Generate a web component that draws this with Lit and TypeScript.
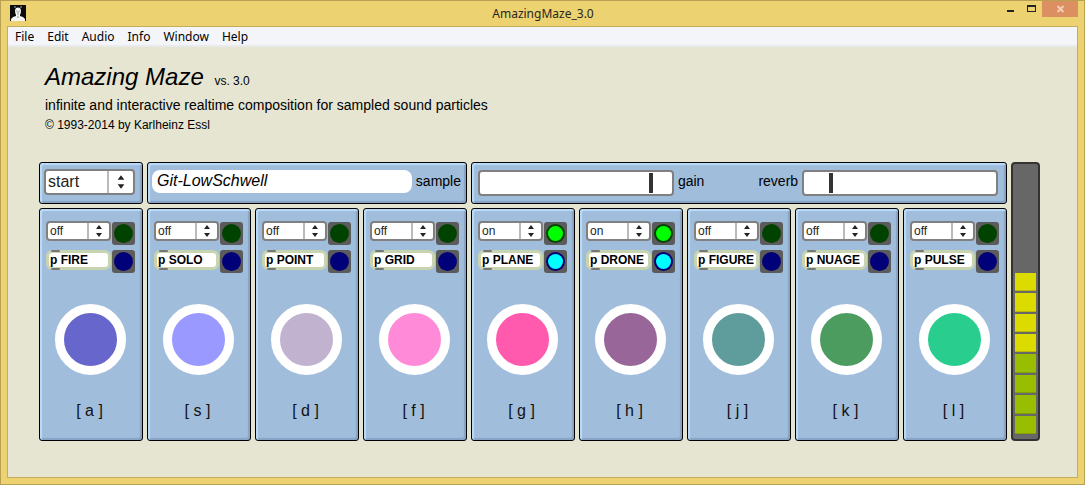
import { LitElement, html, svg, css } from "lit";
import { customElement, property, state } from "lit/decorators.js";

interface Channel {
  name: string;
  key: string;
  color: string;
  on: boolean;
}

@customElement("maze-menu")
export class MazeMenu extends LitElement {
  static styles = css`
    :host {
      display: grid;
      align-items: center;
    }
    .select,
    .arrows {
      grid-area: 1 / 1;
    }
    .select {
      appearance: none;
      box-sizing: border-box;
      width: 100%;
      height: 20px;
      margin: 0;
      padding: 0 22px 0 2px;
      border: 2px solid #808080;
      border-radius: 4px;
      background: #fff;
      color: #222;
      font: 12px/16px "Liberation Sans", Arial, sans-serif;
    }
    .arrows {
      justify-self: end;
      box-sizing: border-box;
      width: 22px;
      height: 16px;
      margin-right: 2px;
      border-left: 2px solid #bbb;
      pointer-events: none;
    }
    .select.large {
      height: 26px;
      padding-right: 28px;
      font-size: 16px;
      line-height: 22px;
    }
    .arrows.large {
      width: 26px;
      height: 22px;
      padding: 2px;
    }
  `;

  @property() label = "";
  @property() value = "";
  @property({ type: Array }) options: string[] = [];
  @property({ type: Boolean }) large = false;

  private pick(event: Event) {
    this.value = (event.target as HTMLSelectElement).value;
    this.dispatchEvent(new CustomEvent("pick", { detail: this.value }));
  }

  render() {
    const size = this.large ? "large" : "";
    return html`
      <select class="select ${size}" aria-label=${this.label} @change=${this.pick}>
        ${this.options.map((o) => html`<option ?selected=${o === this.value}>${o}</option>`)}
      </select>
      <svg class="arrows ${size}" viewBox="0 0 18 16" aria-hidden="true">
        <path d="M6 6 L9 2 L12 6 Z M6 10 L9 14 L12 10 Z" fill="#222" />
      </svg>
    `;
  }
}

@customElement("maze-channel")
export class MazeChannel extends LitElement {
  static styles = css`
    :host {
      display: flex;
      flex-direction: column;
      padding: 12px 7px 20px 6px;
    }
    .row {
      display: grid;
      grid-template-columns: minmax(0, 1fr) 23px;
      column-gap: 1px;
      align-items: start;
    }
    .switch {
      height: 24px;
      margin-bottom: 5px;
    }
    .led {
      display: block;
      width: 23px;
      height: 23px;
      align-self: end;
    }
    .patch {
      position: relative;
      box-sizing: border-box;
      height: 20px;
      margin: 0;
      padding: 0 0 0 1px;
      border: 3px solid #c8d3af;
      border-radius: 6px;
      background: #fff;
      color: #000;
      font: bold 12px/14px "Liberation Sans", Arial, sans-serif;
      text-align: left;
      white-space: nowrap;
    }
    .patch::before,
    .patch::after {
      content: "";
      position: absolute;
      left: 2px;
      width: 9px;
      height: 2px;
      border-radius: 1px;
      background: #777;
    }
    .patch::before {
      top: -3px;
    }
    .patch::after {
      bottom: -3px;
    }
    .pad {
      align-self: center;
      box-sizing: border-box;
      width: 71px;
      height: 71px;
      margin: 31px 0 27px;
      padding: 0;
      border: 9px solid #fff;
      border-radius: 50%;
    }
    .key {
      padding-right: 2px;
      color: #111;
      font-size: 16px;
      line-height: 18px;
      text-align: center;
    }
  `;

  @property({ type: Object }) channel!: Channel;
  @state() private on = false;

  willUpdate(changed: Map<string, unknown>) {
    if (changed.has("channel")) this.on = this.channel.on;
  }

  private led(title: string, lit: string, dark: string) {
    return html`
      <svg class="led" viewBox="0 0 23 23" role="img" aria-label=${title}>
        <rect width="23" height="23" rx="3" fill="#5b5b5b" />
        <circle cx="11.5" cy="11.5" r="9.5" fill=${dark} />
        ${this.on ? svg`<circle cx="11.5" cy="11.5" r="7.5" fill=${lit} />` : null}
      </svg>
    `;
  }

  render() {
    const { name, key, color } = this.channel;
    return html`
      <div class="row switch">
        <maze-menu
          .label=${name + " switch"}
          .value=${this.on ? "on" : "off"}
          .options=${["off", "on"]}
          @pick=${(e: CustomEvent) => (this.on = e.detail === "on")}
        ></maze-menu>
        ${this.led(name + " power", "#00ff00", "#004300")}
      </div>
      <div class="row">
        <button class="patch" type="button">p ${name}</button>
        ${this.led(name + " activity", "#00ffff", "#000078")}
      </div>
      <button
        class="pad"
        type="button"
        aria-label="Trigger ${name}"
        style="background:${color}"
      ></button>
      <div class="key">[ ${key} ]</div>
    `;
  }
}

@customElement("app-root")
export class AppRoot extends LitElement {
  static styles = css`
    :host {
      display: flex;
      flex-direction: column;
      box-sizing: border-box;
      min-height: 100vh;
      padding: 0 7px 6px;
      border: 1px solid #b8a152;
      background: #ecd270;
      color: #000;
      font-family: "Liberation Sans", Arial, sans-serif;
    }
    .titlebar {
      display: grid;
      grid-template-columns: 92px 1fr 92px;
      align-items: start;
      height: 25px;
      margin-right: -1px;
      font: 12px/25px "Noto Sans", "Open Sans", sans-serif;
      color: #2b2620;
    }
    .app-icon {
      display: block;
      width: 16px;
      height: 16px;
      margin: 4px 0 0 2px;
    }
    .caption {
      text-align: center;
    }
    .window-buttons {
      display: flex;
      justify-content: flex-end;
    }
    .window-button {
      width: 21px;
      height: 16px;
      margin: 0;
      padding: 0;
      border: 0;
      background: none;
    }
    .window-button.close {
      width: 36px;
      background: #dc8f61;
    }
    .window-button svg {
      display: block;
      margin: auto;
    }
    .frame {
      flex: 1;
      display: flex;
      flex-direction: column;
      border: 1px solid #c4ae5c;
      margin: 0 -1px;
      background: #e6e5d2;
    }
    .menubar {
      display: flex;
      gap: 13px;
      padding: 2px 7px 0;
      border-bottom: 2px solid #e9eaeb;
      background: #f4f5f8;
      font: 12px/16px "Noto Sans", "Open Sans", sans-serif;
    }
    .menubar a {
      color: #000;
      text-decoration: none;
    }
    .content {
      padding: 18px 37px 35px 31px;
    }
    .intro {
      padding: 0 6px;
      margin-bottom: 28px;
    }
    .name {
      margin: 0;
      font-size: 24px;
      line-height: 24px;
      font-weight: normal;
    }
    .version {
      margin-left: 4px;
      font-size: 12px;
    }
    .subtitle {
      margin: 0;
      font-size: 14px;
      line-height: 24px;
    }
    .credit {
      margin: 0;
      font-size: 12px;
      line-height: 17px;
    }
    .board {
      display: grid;
      grid-template-columns: repeat(9, minmax(0, 1fr)) 29px;
      gap: 4px;
    }
    .panel {
      box-sizing: border-box;
      border: 1px solid #000;
      border-radius: 3px;
      background: #a1bddc;
      box-shadow:
        inset 2px 2px 1px #b9daf8,
        inset -2px -2px 1px #86a3c6;
    }
    .bar {
      display: flex;
      align-items: center;
      height: 42px;
      font-size: 14px;
      line-height: 18px;
    }
    .transport {
      padding: 0 7px 2px 4px;
    }
    .transport maze-menu {
      flex: 1;
    }
    .sample {
      grid-column: span 3;
      gap: 4px;
      padding: 0 5px 4px 4px;
    }
    .file {
      flex: 1;
      box-sizing: border-box;
      min-width: 0;
      height: 23px;
      margin: 0;
      padding: 0 5px;
      border: 0;
      border-radius: 8px;
      background: #fff;
      color: #000;
      font: italic 16px/20px "Liberation Sans", Arial, sans-serif;
    }
    .mix {
      grid-column: span 5;
      gap: 4px;
      padding: 0 8px 0 6px;
    }
    .mix label {
      padding-bottom: 4px;
    }
    .reverb-label {
      margin-left: 50px;
    }
    .slider {
      appearance: none;
      flex: 1;
      box-sizing: border-box;
      min-width: 0;
      height: 26px;
      margin: 0;
      border: 2px solid #808080;
      border-radius: 4px;
      background: #fff;
    }
    .slider::-webkit-slider-thumb {
      appearance: none;
      width: 4px;
      height: 20px;
      border-radius: 0;
      background: #333;
    }
    .slider::-moz-range-thumb {
      width: 4px;
      height: 20px;
      border: 0;
      border-radius: 0;
      background: #333;
    }
    .meter {
      grid-column: 10;
      grid-row: 1 / 3;
      display: grid;
      grid-auto-rows: 1fr;
      gap: 2px;
      padding: 7px 2px 5px;
      border: 2px solid #333;
      border-radius: 4px;
      background: #676767;
    }
    .segment.low {
      background: #99bd00;
      box-shadow: inset 0 -1px #83a000;
    }
    .segment.high {
      background: #dbdb00;
      box-shadow: inset 0 -1px #b9b900;
    }
  `;

  private menus = ["File", "Edit", "Audio", "Info", "Window", "Help"];

  private channels: Channel[] = [
    { name: "FIRE", key: "a", color: "#6666cc", on: false },
    { name: "SOLO", key: "s", color: "#9999ff", on: false },
    { name: "POINT", key: "d", color: "#c1b3cf", on: false },
    { name: "GRID", key: "f", color: "#ff8ad8", on: false },
    { name: "PLANE", key: "g", color: "#ff5aad", on: true },
    { name: "DRONE", key: "h", color: "#996699", on: true },
    { name: "FIGURE", key: "j", color: "#5f9c9c", on: false },
    { name: "NUAGE", key: "k", color: "#4c9c60", on: false },
    { name: "PULSE", key: "l", color: "#29ce8e", on: false },
  ];

  // Meter segments from top to bottom.
  private meter = [
    ...Array(5).fill("off"),
    ...Array(4).fill("high"),
    ...Array(4).fill("low"),
  ];

  render() {
    return html`
      <header class="titlebar">
        <svg class="app-icon" viewBox="0 0 16 16" aria-hidden="true">
          <rect width="16" height="16" fill="#0b0b0b" />
          <path
            d="M6 3 Q8 2 10 3 L11 5 Q11 9 10 10 L10 11 L13 12 L15 14 V16 H1 V14 L3 12 L6 11 L6 10 Q5 9 5 5 Z"
            fill="#f4f4f4"
          />
          <path d="M5 1 v2 M11 1 v2" stroke="#aaa" fill="none" />
          <path d="M6 6 h1 M9 6 h1 M8 6 v2 M7 9 h2 M7 12 h2" stroke="#999" fill="none" />
        </svg>
        <div class="caption">AmazingMaze_3.0</div>
        <div class="window-buttons">
          <button class="window-button" type="button" aria-label="Minimize">
            <svg width="11" height="16" viewBox="0 0 11 16">
              <path d="M2 9 h7 v2 h-7 Z" fill="#222" />
            </svg>
          </button>
          <button class="window-button" type="button" aria-label="Maximize">
            <svg width="11" height="16" viewBox="0 0 11 16">
              <path d="M1 4 h9 v7 h-9 Z M2 6 v4 h7 v-4 Z" fill="#222" fill-rule="evenodd" />
            </svg>
          </button>
          <button class="window-button close" type="button" aria-label="Close">
            <svg width="11" height="16" viewBox="0 0 11 16">
              <path d="M2.500 5 L8.500 11 M8.500 5 L2.500 11" stroke="#f3cfb6" stroke-width="2" />
            </svg>
          </button>
        </div>
      </header>
      <div class="frame">
        <nav class="menubar">
          ${this.menus.map((m) => html`<a href="#${m.toLowerCase()}">${m}</a>`)}
        </nav>
        <main class="content">
          <div class="intro">
            <h1 class="name"><em>Amazing Maze</em> <span class="version">vs. 3.0</span></h1>
            <p class="subtitle">
              infinite and interactive realtime composition for sampled sound particles
            </p>
            <p class="credit">© 1993-2014 by Karlheinz Essl</p>
          </div>
          <div class="board">
            <section class="panel bar transport">
              <maze-menu
                large
                .label=${"Transport"}
                .value=${"start"}
                .options=${["start", "stop"]}
              ></maze-menu>
            </section>
            <section class="panel bar sample">
              <input class="file" id="file" type="text" value="Git-LowSchwell" />
              <label for="file">sample</label>
            </section>
            <section class="panel bar mix">
              <input class="slider" id="gain" type="range" min="0" max="100" value="90" />
              <label for="gain">gain</label>
              <label class="reverb-label" for="reverb">reverb</label>
              <input class="slider" id="reverb" type="range" min="0" max="100" value="13" />
            </section>
            ${this.channels.map(
              (c) => html`<maze-channel class="panel" .channel=${c}></maze-channel>`,
            )}
            <div class="meter" role="img" aria-label="Output level">
              ${this.meter.map((s) => html`<div class="segment ${s}"></div>`)}
            </div>
          </div>
        </main>
      </div>
    `;
  }
}
